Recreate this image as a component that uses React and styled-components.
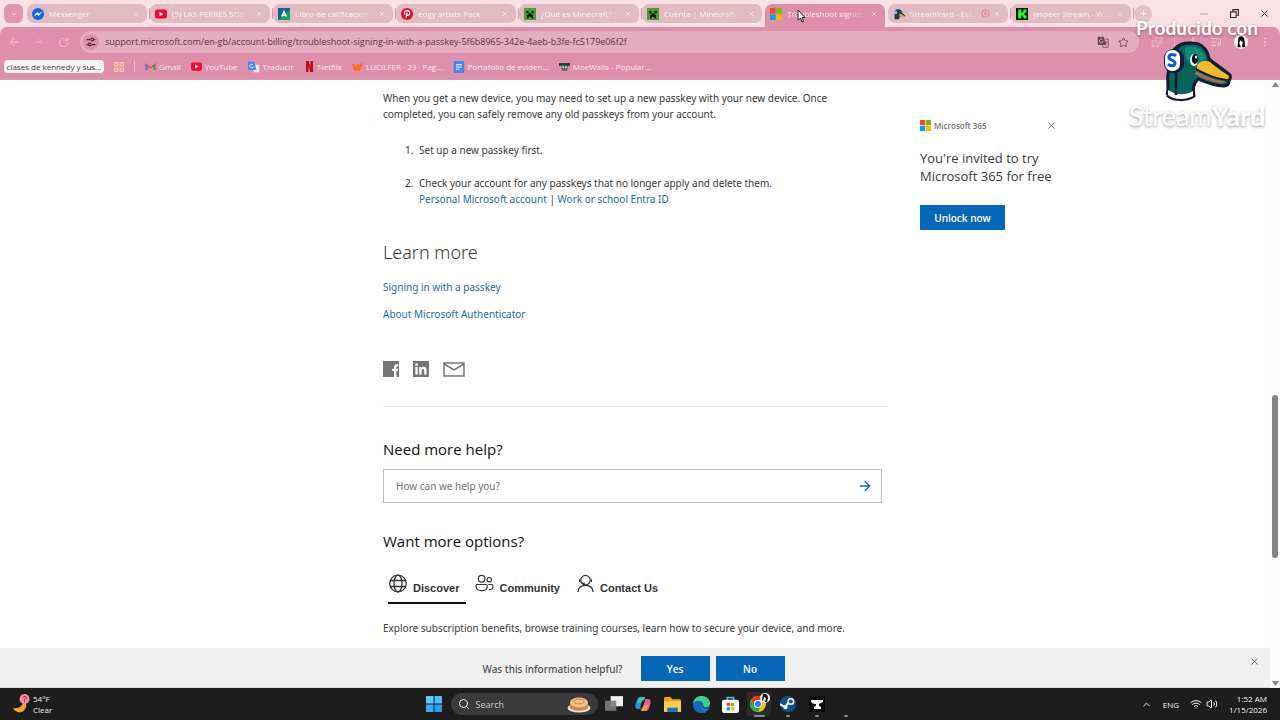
import React from 'react';
import styled, { createGlobalStyle } from 'styled-components';
import {
  ArrowLeft,
  ArrowRight,
  ChevronDown,
  ChevronUp,
  Download,
  EllipsisVertical,
  ListMusic,
  Minus,
  Plus,
  Puzzle,
  RotateCw,
  Search,
  Star,
  Volume2,
  Wifi,
  X,
} from 'lucide-react';

const GlobalStyle = createGlobalStyle`
  * {
    box-sizing: border-box;
  }
  body {
    margin: 0;
    font-family: 'Noto Sans', 'Open Sans', sans-serif;
    font-size: 10px;
    line-height: 16px;
    color: #3a3a3a;
  }
  button,
  input {
    font: inherit;
    color: inherit;
    border: 0;
    padding: 0;
    background: none;
  }
  svg {
    display: block;
    flex: none;
  }
  a {
    color: #2b6c9e;
    text-decoration: none;
  }
`;

const Screen = styled.div`
  position: relative;
  display: flex;
  flex-direction: column;
  height: 100vh;
  overflow: hidden;
  background: #fefefe;
`;

/* browser tabs */

const BrowserFrame = styled.header`
  font-family: 'Open Sans', 'Noto Sans', sans-serif;
  background: #fbe0e6;
`;

const TabStrip = styled.div`
  display: flex;
  align-items: center;
  height: 27px;
  padding-left: 4px;
`;

const TabMenuButton = styled.button`
  display: grid;
  place-items: center;
  width: 19px;
  height: 19px;
  margin-right: 4px;
  border-radius: 6px;
  background: #e096b0;
  color: #fff;
`;

const TabSlot = styled.div`
  flex: 0 1 123px;
  min-width: 0;
  height: 27px;
  padding: 4px 0;
  display: flex;
  gap: 1px;
  align-items: center;
  padding-bottom: ${(p) => (p.$active ? 0 : 4)}px;
  &::after {
    content: '';
    width: 1px;
    height: 11px;
    margin-left: 1px;
    background: ${(p) => (p.$line ? '#dd9db0' : 'transparent')};
  }
`;

const Tab = styled.div`
  flex: 1;
  min-width: 0;
  height: 100%;
  display: flex;
  align-items: center;
  gap: 3px;
  padding: 0 7px 0 5px;
  padding-bottom: ${(p) => (p.$active ? 4 : 0)}px;
  border-radius: ${(p) => (p.$active ? '7px 7px 0 0' : '7px')};
  background: ${(p) => (p.$active ? '#de8fab' : '#e0bcc2')};
  color: #fdeef2;
`;

const TabTitle = styled.button`
  flex: 1;
  min-width: 0;
  display: flex;
  align-items: center;
  gap: 5px;
  font-size: 8px;
  text-align: left;
  span {
    flex: 1;
    min-width: 0;
    overflow: hidden;
    white-space: nowrap;
    mask-image: linear-gradient(90deg, #000 75%, transparent);
  }
`;

const PlainButton = styled.button`
  display: grid;
  place-items: center;
  color: inherit;
`;

const NewTabButton = styled(PlainButton)`
  width: 18px;
  height: 18px;
  border-radius: 50%;
  background: #e5c0c7;
  color: #fff;
`;

const WindowButtons = styled.div`
  display: flex;
  gap: 20px;
  margin-left: auto;
  padding-right: 10px;
  color: #3b2a30;
  & > :first-child {
    color: #b79aa3;
  }
`;

/* toolbar */

const Toolbar = styled.div`
  background: #de8fab;
  border-radius: 7px 7px 0 0;
  border-bottom: 1px solid #d49aae;
  height: 53px;
  flex: none;
  padding-top: 4px;
`;

const AddressRow = styled.div`
  display: flex;
  align-items: center;
  height: 22px;
  padding: 0 9px 0 8px;
  color: #f8c3d2;
`;

const NavButtons = styled.div`
  display: flex;
  gap: 13px;
  width: 72px;
`;

const AddressBar = styled.div`
  flex: 1;
  height: 22px;
  display: flex;
  align-items: center;
  gap: 9px;
  padding: 0 10px 0 3px;
  border-radius: 11px;
  background: #e5adc0;
  color: #6f4453;
`;

const SiteInfo = styled(PlainButton)`
  width: 16px;
  height: 16px;
  margin-right: -3px;
  border-radius: 50%;
  background: #de8fab;
  color: #4c2b38;
`;

const UrlInput = styled.input`
  flex: 1;
  min-width: 0;
  font-size: 9px;
  color: #5d3745;
  outline: 0;
`;

const Extensions = styled.div`
  display: flex;
  align-items: center;
  justify-content: space-between;
  width: 120px;
  margin-left: 12px;
`;

const Bookmarks = styled.nav`
  display: flex;
  align-items: center;
  gap: 10px;
  height: 27px;
  padding-left: 4px;
  font-size: 8px;
  a {
    display: flex;
    align-items: center;
    gap: 3px;
    color: #fdeaf0;
    white-space: nowrap;
  }
`;

const BookmarkGroup = styled.button`
  width: 100px;
  height: 13px;
  line-height: 12px;
  border-radius: 4px;
  background: #fdf6f8;
  color: #45363b;
  white-space: nowrap;
`;

const Divider = styled.i`
  width: 1px;
  height: 11px;
  background: #edb8c9;
`;

/* article */

const Viewport = styled.div`
  flex: 1;
  min-height: 0;
  display: grid;
  grid-template-columns: 1fr 10px;
`;

const Page = styled.div`
  display: flex;
  flex-direction: column;
  min-height: 0;
`;

const PageBody = styled.div`
  flex: 1;
  min-height: 0;
  overflow: hidden;
  display: flex;
  justify-content: center;
  gap: 32px;
`;

const Article = styled.main`
  flex: 0 1 505px;
  margin-left: 170px;
  padding-top: 10px;
  p {
    margin: 0;
  }
`;

const Intro = styled.p`
  padding-right: 40px;
`;

const Steps = styled.ol`
  display: flex;
  flex-direction: column;
  gap: 17px;
  margin: 20px 0 0;
  padding-left: 33px;
  li {
    padding-left: 3px;
  }
`;

const SectionTitle = styled.h2`
  margin: 33px 0 0;
  font-size: 18px;
  line-height: 24px;
  font-weight: 300;
`;

const SubTitle = styled.h3`
  margin: 0;
  font-family: 'Open Sans', 'Noto Sans', sans-serif;
  font-size: 15px;
  line-height: 24px;
  font-weight: 400;
  color: #111;
`;

const LinkList = styled.div`
  display: flex;
  flex-direction: column;
  align-items: flex-start;
  gap: 11px;
  margin-top: 15px;
`;

const ShareRow = styled.div`
  display: flex;
  align-items: center;
  gap: 14px;
  height: 16px;
  margin: 39px 0 29px;
  a {
    color: #767676;
  }
`;

const Rule = styled.hr`
  margin: 0 0 30px;
  border: 0;
  border-top: 1px solid #e6e6e6;
`;

const HelpBox = styled.form`
  display: flex;
  align-items: center;
  height: 34px;
  margin: 8px 6px 26px 0;
  padding: 0 8px 0 12px;
  border: 1px solid #bcbcbc;
  input {
    flex: 1;
    outline: 0;
  }
  input::placeholder {
    color: #757575;
  }
  button {
    color: #1f6aa8;
  }
`;

const OptionTabs = styled.div`
  display: flex;
  gap: 9px;
  margin: 16px 0 16px 5px;
`;

const OptionTab = styled.button`
  display: flex;
  gap: 5px;
  height: 35px;
  padding: 5px 7px 0 0;
  border-bottom: 2px solid ${(p) => (p.$active ? '#111' : 'transparent')};
  font-family: 'Liberation Sans', sans-serif;
  font-size: 11px;
  font-weight: 700;
  color: #333;
  span {
    padding-top: 6px;
  }
`;

const Promo = styled.aside`
  width: 137px;
  padding-top: 37px;
  p {
    margin: 15px 0 20px;
    font-family: 'Open Sans', 'Noto Sans', sans-serif;
    font-size: 13px;
    line-height: 18px;
    white-space: nowrap;
  }
`;

const PromoHead = styled.div`
  display: flex;
  align-items: center;
  gap: 3px;
  height: 17px;
  font-family: 'Open Sans', 'Noto Sans', sans-serif;
  font-size: 8px;
  font-weight: 600;
  color: #737373;
  button {
    margin-left: auto;
    color: #444;
  }
`;

const BlueButton = styled.button`
  width: ${(p) => p.$width}px;
  height: 25px;
  background: #0667b8;
  color: #fff;
  font-family: 'Open Sans', 'Noto Sans', sans-serif;
  font-weight: 600;
`;

const Feedback = styled.section`
  display: grid;
  grid-template-columns: 1fr auto 1fr;
  height: 40px;
  padding: 8px 10px 7px 7px;
  background: #f0f0f0;
  border-bottom: 1px solid #dcdedc;
`;

const FeedbackAsk = styled.div`
  grid-column: 2;
  display: flex;
  align-items: center;
  gap: 6px;
  font-weight: 500;
  color: #505050;
  span {
    margin-right: 12px;
  }
`;

const FeedbackClose = styled(PlainButton)`
  justify-self: end;
  align-self: start;
`;

const ScrollTrack = styled.div`
  display: grid;
  grid-template-rows: 9px 305fr 163fr 121fr 9px;
  justify-items: center;
  align-items: center;
  background: #fdfdfd;
  color: #858585;
`;

const ScrollThumb = styled.div`
  grid-row: 3;
  width: 6px;
  height: 100%;
  border-radius: 3px;
  background: #858585;
`;

const ScrollArrow = styled.svg`
  grid-row: ${(p) => p.$row};
`;

/* taskbar */

const Taskbar = styled.footer`
  flex: none;
  display: grid;
  grid-template-columns: 1fr auto 1fr;
  align-items: center;
  height: 32px;
  background: #1d1d1d;
  color: #f2f2f2;
  font-family: 'Open Sans', 'Noto Sans', sans-serif;
  font-size: 8px;
  line-height: 11px;
`;

const Weather = styled.button`
  justify-self: start;
  display: flex;
  align-items: center;
  gap: 3px;
  padding-left: 12px;
  text-align: left;
`;

const TaskIcons = styled.div`
  display: flex;
  align-items: center;
`;

const TaskButton = styled.button`
  position: relative;
  display: grid;
  place-items: center;
  width: 29px;
  height: 32px;
  &::after {
    content: '';
    position: absolute;
    bottom: 3px;
    width: ${(p) => p.$dot || 0}px;
    height: 2px;
    border-radius: 1px;
    background: #8a8a8a;
  }
`;

const TaskSearch = styled.label`
  display: flex;
  align-items: center;
  gap: 6px;
  width: 147px;
  height: 22px;
  margin: 0 2px;
  padding: 0 7px;
  border-radius: 11px;
  background: #3a3a3a;
  font-size: 9px;
  input {
    flex: 1;
    min-width: 0;
    outline: 0;
  }
  input::placeholder {
    color: #c9c9c9;
  }
`;

const Tray = styled.div`
  justify-self: end;
  display: flex;
  align-items: center;
  padding-right: 13px;
  gap: 11px;
  text-align: right;
`;

const TrayStatus = styled.button`
  display: flex;
  gap: 4px;
`;

/* broadcast mark and pointer, both over everything else */

const Watermark = styled.div`
  position: absolute;
  top: 16px;
  right: 14px;
  width: 138px;
  display: flex;
  flex-direction: column;
  align-items: center;
  color: #fff;
  font-family: Lato, sans-serif;
  font-size: 19px;
  line-height: 24px;
  font-weight: 700;
  text-shadow: 0 1px 3px rgba(90, 60, 70, 0.6);
  white-space: nowrap;
  pointer-events: none;
`;

const Brand = styled.div`
  font-size: 27px;
  line-height: 28px;
  font-weight: 400;
  text-shadow: 0 1px 3px rgba(0, 0, 0, 0.4);
  b {
    font-weight: 900;
  }
`;

const Pointer = styled.svg`
  position: absolute;
  left: 797px;
  top: 9px;
`;

const Icon = ({ size = 12, w, h, box = '0 0 16 16', children }) => (
  <svg width={w || size} height={h || size} viewBox={box} fill="none">
    {children}
  </svg>
);

const MessengerIcon = () => (
  <Icon>
    <circle cx="8" cy="8" r="8" fill="#1264e8" />
    <path d="M3.500 10 7 6l2.200 2L12.500 6 9 10 6.800 8z" fill="#fff" stroke="#fff" />
  </Icon>
);

const YouTubeIcon = ({ size = 12 }) => (
  <Icon size={size}>
    <rect y="2" width="16" height="12" rx="3" fill="#f3062f" />
    <path d="m6 5 5 3-5 3z" fill="#fff" />
  </Icon>
);

const BookIcon = () => (
  <Icon>
    <path d="M0 0h16v16H0z" fill="#12649b" />
    <path d="M0 16 16 3v13z" fill="#15a05b" />
    <path d="m5 11.500 3-7 3 7M6 9.500h4" stroke="#fff" strokeWidth="1.800" />
  </Icon>
);

const PinterestIcon = () => (
  <Icon>
    <circle cx="8" cy="8" r="8" fill="#d3122b" />
    <path
      d="M5.500 9C3.500 6 5 3.500 8.200 3.500c3 0 4 2 3.300 4.200-.7 2.300-3 2.600-3.600 1.300M8.300 6 6.500 13"
      stroke="#fff"
      strokeWidth="1.600"
    />
  </Icon>
);

const CreeperIcon = () => (
  <Icon>
    <path d="M0 0h16v16H0z" fill="#4c9c3b" />
    <path d="M3 4h3v3H3zm7 0h3v3h-3zM6 7h4v2h2v5h-2v-2H6v2H4V9h2z" fill="#0b1a0a" />
  </Icon>
);

const WindowsIcon = ({ size = 12, colors }) => {
  const [a, b, c, d] = colors || ['#f05022', '#7db701', '#00a3ee', '#fdb800'];
  return (
    <Icon size={size}>
      <path d="M0 0h7.500v7.500H0z" fill={a} />
      <path d="M8.500 0H16v7.500H8.500z" fill={b} />
      <path d="M0 8.500h7.500V16H0z" fill={c} />
      <path d="M8.500 8.500H16V16H8.500z" fill={d} />
    </Icon>
  );
};

const DuckSmallIcon = () => (
  <Icon>
    <path d="M2 15V6c0-6 10-6 10 0l4 4v2l-7-1-1 4z" fill="#133f46" />
    <path d="m9 7 7 4-1 2-7-3z" fill="#f0a02d" />
    <circle cx="3.500" cy="6" r="2.200" fill="#8fb8ff" />
  </Icon>
);

const KickIcon = () => (
  <Icon>
    <path d="M0 0h16v16H0z" fill="#0a1a08" />
    <path d="M3 2h4v4h2V4h1V2h4v4h-2v1h-1v2h1v1h2v4h-4v-2H9v-2H7v4H3z" fill="#33f523" />
  </Icon>
);

const GmailIcon = () => (
  <Icon size={11}>
    <path d="M1 13V3l7 6 7-6v10h-3V8l-4 3-4-3v5z" fill="#ea4335" />
    <path d="M1 4v9h3V7z" fill="#4285f4" />
    <path d="M15 4v9h-3V7z" fill="#34a853" />
  </Icon>
);

const TranslateIcon = () => (
  <Icon>
    <path d="M5 5h10v10H8z" fill="#dfe6ee" />
    <path d="M0 1h8l4 11H2a2 2 0 0 1-2-2z" fill="#4285f4" />
    <path d="M7 5.500A2.500 2.500 0 1 0 7 8H5M9 8h5m-1 0-3 5" stroke="#fff" />
  </Icon>
);

const NetflixIcon = () => (
  <Icon size={11}>
    <path d="M3 0h3.500L13 16H9.500z" fill="#e50914" />
    <path d="M3 0h3.500v16H3zM9.500 0H13v16H9.500z" fill="#a9101c" />
  </Icon>
);

const WattpadIcon = () => (
  <Icon size={11}>
    <path d="M2 4c1 6 1 9 3 9 2-1 2-5 4-8-1 5-1 8 1 8 2-1 2-7 5-9" stroke="#ff6a1d" strokeWidth="3.500" />
  </Icon>
);

const DocsIcon = () => (
  <Icon>
    <rect x="1" width="14" height="16" rx="2" fill="#4584f0" />
    <path d="M4 5h8M4 8h8M4 11h5" stroke="#fff" strokeWidth="1.500" />
  </Icon>
);

const MoeIcon = () => (
  <Icon size={11}>
    <path d="M0 3h16v4H0z" fill="#2b3a34" />
    <path d="M3 7h10l-1 7H4z" fill="#56705c" />
    <path d="M5 8h2v2H5zm4 0h2v2H9z" fill="#fff" />
  </Icon>
);

const SettingsSliders = () => (
  <Icon size={10}>
    <path d="M1 4h6m6 0h2M1 12h2m6 0h6" stroke="currentColor" strokeWidth="2" />
    <circle cx="10" cy="4" r="2.200" stroke="currentColor" strokeWidth="1.800" />
    <circle cx="6" cy="12" r="2.200" stroke="currentColor" strokeWidth="1.800" />
  </Icon>
);

const PageTranslate = () => (
  <Icon size={12}>
    <path d="M1 1h8l3 11H2.500L1 11z" fill="currentColor" />
    <path d="M7.500 5A2.500 2.500 0 1 0 8 7.500H6" stroke="#e5adc0" />
    <path d="M11 4h4v11H8l-1-3m3-4h4m-2-1v1m1 0-3 4m0-2 3 2" stroke="currentColor" />
  </Icon>
);

const ProfileIcon = () => (
  <Icon size={14}>
    <circle cx="8" cy="8" r="8" fill="#fff" />
    <path d="M5 3c3-3 7-1 7 3l1 8H9l1-6-3-2-1 3 2 5H4z" fill="#111" />
  </Icon>
);

const FacebookIcon = () => (
  <Icon size={16}>
    <path
      fill="currentColor"
      d="M0 0h16v16h-2.600V10h1.500l.3-2.200h-1.800V6.400c0-.7.200-1.100 1.100-1.100h.8v-2c-.4-.1-.9-.1-1.400-.1-1.800 0-2.900 1.100-2.900 2.900v1.700H9V10h2v6H0z"
    />
  </Icon>
);

const LinkedInIcon = () => (
  <Icon size={16}>
    <path
      fill="currentColor"
      fillRule="evenodd"
      d="M0 0h16v16H0zM2.300 6v7.600h2.400V6zM3.500 2.300a1.400 1.400 0 1 0 0 2.800 1.400 1.400 0 0 0 0-2.800M6.200 6v7.600h2.400V9.800c0-1 .3-1.900 1.400-1.900s1.200 1 1.200 2v3.700h2.400V9.400c0-2.100-.5-3.600-2.900-3.600-1.100 0-1.900.6-2.200 1.200V6z"
    />
  </Icon>
);

const MailIcon = () => (
  <Icon w={22} h={16} box="0 0 22 16">
    <path d="M1 2h20v13H1zm0 1 10 6 10-6" stroke="currentColor" strokeWidth="1.500" />
  </Icon>
);

const GlobeIcon = () => (
  <Icon size={20} box="0 0 20 20">
    <g stroke="#333" strokeWidth="1.300">
      <circle cx="10" cy="9.500" r="8.300" />
      <ellipse cx="10" cy="9.500" rx="4" ry="8.300" />
      <path d="M2.500 6.500h15M2.500 12.500h15" />
    </g>
  </Icon>
);

const PeopleIcon = () => (
  <Icon size={19} box="0 0 20 20">
    <g stroke="#333" strokeWidth="1.200">
      <circle cx="7" cy="5" r="3.500" />
      <circle cx="15" cy="6" r="2.300" />
      <path d="M2.500 11h9c1 0 1.500.5 1.500 1.500 0 3-2 5-6 5s-6-2-6-5c0-1 .5-1.500 1.500-1.500zM14 11h3.500c1 0 1.500.5 1.500 1.500 0 2.500-1.500 4-4.500 4" />
    </g>
  </Icon>
);

const AgentIcon = () => (
  <Icon size={19} box="0 0 20 20">
    <g stroke="#333" strokeWidth="1.300">
      <circle cx="10" cy="6.500" r="5" />
      <path d="M3.800 5.500v3M16.200 5.500v3M5 8.500c1.500 1.500 3 1.500 4.500 1M2 19c.5-5 4-7 8-7s7.500 2 8 7" />
    </g>
  </Icon>
);

const MoonIcon = () => (
  <Icon w={18} h={20} box="0 0 18 20">
    <path d="M10 4c3 8-3 11-9 10 3 6 11 6 13-1 1-4-1-7-4-9" fill="#eda63a" />
    <circle cx="12.500" cy="5" r="5" fill="#f58a98" />
    <path d="M11 3.500c.5-1.500 3-1.500 3 0S12.500 5 12.500 6.500m0 .7v1" stroke="#6c2430" />
  </Icon>
);

const PancakeIcon = () => (
  <Icon w={24} h={18} box="0 0 24 18">
    <ellipse cx="12" cy="13" rx="11.500" ry="4.500" fill="#e8e0d6" />
    <path d="M3 7h18v5c0 5-18 5-18 0z" fill="#c98a4b" />
    <ellipse cx="12" cy="7.500" rx="9" ry="5" fill="#eec28a" />
    <ellipse cx="12" cy="6.500" rx="5" ry="2.400" stroke="#c97f35" />
  </Icon>
);

const TaskViewIcon = () => (
  <Icon size={18}>
    <path d="M5 1h11v9H5z" fill="#f0f0f0" />
    <path d="M0 5h10v9H0z" fill="#7d7d7d" fillOpacity=".9" />
  </Icon>
);

const CopilotIcon = () => (
  <Icon size={16}>
    <path d="M5 1h5l-4 12H3c-3 0-3-3-2-6 1-4 2-6 4-6" fill="#2b8ee6" />
    <path d="M4 3c1-2 2-2 3-2h3L8 7H2z" fill="#44c4a1" />
    <path d="M11 15H6l4-12h3c3 0 3 3 2 6-1 4-2 6-4 6" fill="#e05c9a" />
    <path d="M12 13c-1 2-2 2-3 2H6l2-6h6z" fill="#f39a4a" />
    <path d="m7 5 3-1-2 7-3 1z" fill="#231f2a" />
  </Icon>
);

const FolderIcon = () => (
  <Icon size={17}>
    <path d="M0 2.500C0 1.500.5 1 1.500 1H6l2 2h6.500c1 0 1.500.5 1.500 1.500V7H0z" fill="#e2a21c" />
    <path d="M0 5h16v10H0z" fill="#fbd04d" />
    <path d="M3 15v-4h10v4z" fill="#1c76c8" />
  </Icon>
);

const EdgeIcon = () => (
  <Icon size={17}>
    <circle cx="8" cy="8" r="8" fill="#1a7fd0" />
    <path d="M0 7C1 1 6 0 8 0c5 0 8 3.500 8 6.500 0 3-2 4-4 4S9 9.500 9.600 8.500C10.500 6 5 2 0 7" fill="#3fcf8e" />
    <path d="M0 8c2-5 9-4 9.500-1-2 1-3 5 1 7.500 1 .5 2 .3 3 0C8 18 0 15 0 8" fill="#1567b8" />
    <path d="M9.500 7.500c-1.500 2-.5 5 5.500 4 .5-.5.500-1-.5-.6-3 .8-5.500-.4-5-2.400" fill="#1d1d1d" />
  </Icon>
);

const StoreIcon = () => (
  <Icon size={17}>
    <path d="M5 4V1.500h6V4" stroke="#58a6e8" strokeWidth="1.500" />
    <rect y="3.500" width="16" height="12.500" rx="2" fill="#f4f6f8" />
    <path d="M4.500 6.500h3v3h-3z" fill="#f05022" />
    <path d="M8.500 6.500h3v3h-3z" fill="#7db701" />
    <path d="M4.500 10.500h3v3h-3z" fill="#00a3ee" />
    <path d="M8.500 10.500h3v3h-3z" fill="#fdb800" />
  </Icon>
);

const ChromeIcon = () => (
  <Icon size={24} box="0 0 24 24">
    <rect width="24" height="24" rx="3" fill="#2b2b2b" />
    <circle cx="11" cy="12" r="8" fill="#fbc116" />
    <path d="M4 8a8 8 0 0 1 14 0h-7l-3.500 6z" fill="#e33b2e" />
    <path d="M4 8a8 8 0 0 0 7 12l3.500-6h-7z" fill="#2da94f" />
    <circle cx="11" cy="12" r="4" fill="#fff" />
    <circle cx="11" cy="12" r="3" fill="#2b7de9" />
    <circle cx="18" cy="6" r="5" fill="#f4f4f4" />
    <path d="M16 2c3-1 5 1 5 4l-1 4h-2l1-4-2-1-1 4-1-1z" fill="#111" />
  </Icon>
);

const SteamIcon = () => (
  <Icon size={16}>
    <circle cx="8" cy="8" r="8" fill="#17508f" />
    <path d="m0 8 5 3 5-6" stroke="#fff" strokeWidth="2" />
    <circle cx="10.800" cy="5.500" r="2.800" fill="#17508f" stroke="#fff" strokeWidth="1.400" />
    <circle cx="5.500" cy="11.200" r="2" fill="#fff" />
  </Icon>
);

const AnvilIcon = () => (
  <Icon size={16}>
    <path d="M0 0h16v16H0z" fill="#080808" />
    <path d="M2 4h12v2l-4 2v2l2 1v2H5v-2l2-1V8C4 8 2 7 2 4" fill="#fff" />
  </Icon>
);

const DuckLogo = () => (
  <Icon w={72} h={62} box="0 0 72 62">
    <path
      d="M6 55c3-9-2-17 3-29C8 9 18 2 30 3c12 0 17 8 18 16 7 6 14 10 21 16 1 2 0 4-1 6 0 3-2 5-5 5-8 0-17-3-26-7-5 5-5 9-4 17C25 61 13 61 6 55"
      fill="#07645d"
      stroke="#121a2b"
      strokeWidth="3"
      strokeLinejoin="round"
    />
    <path d="M24 7c12-3 20 4 21 12l-10 8c-8-3-12-11-11-20" fill="#15877b" />
    <path d="M7 50c7 5 17 6 25 1v5c-8 4-19 4-25-1z" fill="#fff" />
    <path d="M36 26c2-5 9-6 13-4 5 5 12 9 19 14l-1 4c-11-1-19-6-31-11z" fill="#f4b82c" />
    <path d="M35 31c9 5 19 9 29 10 0 3-3 3-7 2-9-2-17-5-23-9z" fill="#a66b4c" />
    <path d="M35 29c10 6 21 10 32 11" stroke="#121a2b" strokeWidth="1.500" />
    <ellipse cx="33" cy="20" rx="4" ry="6" fill="#fff" />
    <ellipse cx="34" cy="19" rx="3.200" ry="5" fill="#0e1420" />
    <ellipse cx="35" cy="17" rx="1" ry="1.500" fill="#fff" />
    <path d="M15 30v25M14 11c5-8 12-8 17-8" stroke="#121a2b" strokeWidth="2.500" />
    <rect x="3" y="9" width="20" height="24" rx="9" fill="#121a3d" />
    <rect x="4" y="10" width="15" height="21" rx="7" fill="#fff" />
    <path d="M15 16c-3-3-8-1-7 2s6 2 6 5-4 4-7 1" stroke="#1753d8" strokeWidth="3" />
  </Icon>
);

const tabs = [
  { title: 'Messenger', icon: <MessengerIcon /> },
  { title: '(5) LAS PERRES SOB', icon: <YouTubeIcon /> },
  { title: 'Libro de calificacion', icon: <BookIcon /> },
  { title: 'edgy artists Pack', icon: <PinterestIcon /> },
  { title: '¿Qué es Minecraft? |', icon: <CreeperIcon /> },
  { title: 'Cuenta | Minecraft', icon: <CreeperIcon /> },
  { title: 'Troubleshoot signin', icon: <WindowsIcon />, active: true },
  { title: 'StreamYard - Est', icon: <DuckSmallIcon />, live: true },
  { title: 'jaspeer Stream - W...', icon: <KickIcon /> },
];

const bookmarks = [
  { label: 'Gmail', icon: <GmailIcon /> },
  { label: 'YouTube', icon: <YouTubeIcon size={11} /> },
  { label: 'Traducir', icon: <TranslateIcon /> },
  { label: 'Netflix', icon: <NetflixIcon /> },
  { label: 'LUCILFER · 23 · Pag...', icon: <WattpadIcon /> },
  { label: 'Portafolio de eviden...', icon: <DocsIcon /> },
  { label: 'MoeWalls - Popular...', icon: <MoeIcon /> },
];

const options = [
  { label: 'Discover', icon: <GlobeIcon />, active: true },
  { label: 'Community', icon: <PeopleIcon /> },
  { label: 'Contact Us', icon: <AgentIcon /> },
];

const apps = [
  { name: 'Task view', icon: <TaskViewIcon /> },
  { name: 'Copilot', icon: <CopilotIcon /> },
  { name: 'File Explorer', icon: <FolderIcon /> },
  { name: 'Edge', icon: <EdgeIcon /> },
  { name: 'Store', icon: <StoreIcon /> },
  { name: 'Chrome', icon: <ChromeIcon />, dot: 11 },
  { name: 'Steam', icon: <SteamIcon />, dot: 4 },
  { name: 'Anvil', icon: <AnvilIcon />, dot: 4 },
  { name: 'App', icon: null, dot: 4 },
];

const Browser = () => (
  <BrowserFrame>
    <TabStrip>
      <TabMenuButton aria-label="Search tabs">
        <ChevronDown size={8} />
      </TabMenuButton>
      {tabs.map((tab, i) => (
        <TabSlot
          key={tab.title}
          $active={tab.active}
          $line={!tab.active && !(tabs[i + 1] && tabs[i + 1].active)}
        >
          <Tab $active={tab.active}>
            <TabTitle>
              {tab.icon}
              <span>{tab.title}</span>
            </TabTitle>
            {tab.live && (
              <Icon size={9}>
                <circle cx="8" cy="8" r="6" stroke="#ea8c93" strokeWidth="2" />
                <circle cx="8" cy="8" r="2.500" fill="#ea8c93" />
              </Icon>
            )}
            <PlainButton aria-label="Close tab">
              <X size={8} />
            </PlainButton>
          </Tab>
        </TabSlot>
      ))}
      <NewTabButton aria-label="New tab">
        <Plus size={9} />
      </NewTabButton>
      <WindowButtons>
        <PlainButton aria-label="Minimize">
          <Minus size={12} />
        </PlainButton>
        <PlainButton aria-label="Restore">
          <Icon size={9}>
            <path d="M1 5h10v10H1zM5 5V1h10v10h-4" stroke="currentColor" strokeWidth="2" />
          </Icon>
        </PlainButton>
        <PlainButton aria-label="Close">
          <X size={11} />
        </PlainButton>
      </WindowButtons>
    </TabStrip>
    <Toolbar>
      <AddressRow>
        <NavButtons>
          <PlainButton aria-label="Back">
            <ArrowLeft size={12} />
          </PlainButton>
          <PlainButton aria-label="Forward">
            <ArrowRight size={12} opacity={0.5} />
          </PlainButton>
          <PlainButton aria-label="Reload">
            <RotateCw size={11} />
          </PlainButton>
        </NavButtons>
        <AddressBar>
          <SiteInfo aria-label="Site information">
            <SettingsSliders />
          </SiteInfo>
          <UrlInput
            aria-label="Address"
            defaultValue="support.microsoft.com/en-gb/account-billing/troubleshoot-signing-in-with-a-passkey-5f6b8965-342e-4aeb-b3fe-fc5179e06f2f"
          />
          <PlainButton aria-label="Translate">
            <PageTranslate />
          </PlainButton>
          <PlainButton aria-label="Bookmark">
            <Star size={11} />
          </PlainButton>
        </AddressBar>
        <Extensions>
          <Puzzle size={12} />
          <Divider />
          <Download size={12} />
          <ListMusic size={12} />
          <ProfileIcon />
          <EllipsisVertical size={12} />
        </Extensions>
      </AddressRow>
      <Bookmarks>
        <BookmarkGroup>clases de kennedy y sus...</BookmarkGroup>
        <Icon size={10}>
          <path d="M1 1h5v5H1zm9 0h5v5h-5zM1 10h5v5H1zm9 0h5v5h-5z" stroke="#f9cba9" strokeWidth="2" />
        </Icon>
        <Divider />
        {bookmarks.map((b) => (
          <a href="#bookmark" key={b.label}>
            {b.icon}
            {b.label}
          </a>
        ))}
      </Bookmarks>
    </Toolbar>
  </BrowserFrame>
);

const SupportArticle = () => (
  <Article>
    <Intro>
      When you get a new device, you may need to set up a new passkey with your
      new device. Once completed, you can safely remove any old passkeys from
      your account.
    </Intro>
    <Steps>
      <li>Set up a new passkey first.</li>
      <li>
        Check your account for any passkeys that no longer apply and delete
        them.
        <br />
        <a href="#personal">Personal Microsoft account</a> |{' '}
        <a href="#work">Work or school Entra ID</a>
      </li>
    </Steps>
    <SectionTitle>Learn more</SectionTitle>
    <LinkList>
      <a href="#signing">Signing in with a passkey</a>
      <a href="#authenticator">About Microsoft Authenticator</a>
    </LinkList>
    <ShareRow>
      <a href="#facebook" aria-label="Facebook">
        <FacebookIcon />
      </a>
      <a href="#linkedin" aria-label="LinkedIn">
        <LinkedInIcon />
      </a>
      <a href="#mail" aria-label="Email">
        <MailIcon />
      </a>
    </ShareRow>
    <Rule />
    <SubTitle>Need more help?</SubTitle>
    <HelpBox onSubmit={(e) => e.preventDefault()}>
      <input aria-label="How can we help you?" placeholder="How can we help you?" />
      <PlainButton aria-label="Search">
        <ArrowRight size={16} />
      </PlainButton>
    </HelpBox>
    <SubTitle>Want more options?</SubTitle>
    <OptionTabs>
      {options.map((o) => (
        <OptionTab key={o.label} $active={o.active}>
          {o.icon}
          <span>{o.label}</span>
        </OptionTab>
      ))}
    </OptionTabs>
    <p>
      Explore subscription benefits, browse training courses, learn how to
      secure your device, and more.
    </p>
  </Article>
);

const App = () => {
  return (
    <Screen>
      <GlobalStyle />
      <Browser />
      <Viewport>
        <Page>
          <PageBody>
            <SupportArticle />
            <Promo>
              <PromoHead>
                <WindowsIcon size={11} />
                Microsoft 365
                <PlainButton aria-label="Dismiss offer">
                  <X size={11} strokeWidth={1.5} />
                </PlainButton>
              </PromoHead>
              <p>
                You're invited to try
                <br />
                Microsoft 365 for free
              </p>
              <BlueButton $width={85}>Unlock now</BlueButton>
            </Promo>
          </PageBody>
          <Feedback>
            <FeedbackAsk>
              <span>Was this information helpful?</span>
              <BlueButton $width={69}>Yes</BlueButton>
              <BlueButton $width={69}>No</BlueButton>
            </FeedbackAsk>
            <FeedbackClose aria-label="Close feedback">
              <X size={11} strokeWidth={1.5} />
            </FeedbackClose>
          </Feedback>
        </Page>
        <ScrollTrack>
          <ScrollArrow $row={1} width="7" height="5" viewBox="0 0 7 5">
            <path d="M0 5 3.500 0 7 5z" fill="currentColor" />
          </ScrollArrow>
          <ScrollThumb />
          <ScrollArrow $row={5} width="7" height="5" viewBox="0 0 7 5">
            <path d="m0 0 3.500 5L7 0z" fill="currentColor" />
          </ScrollArrow>
        </ScrollTrack>
      </Viewport>
      <Taskbar>
        <Weather>
          <MoonIcon />
          <span>
            54°F
            <br />
            Clear
          </span>
        </Weather>
        <TaskIcons>
          <TaskButton aria-label="Start">
            <WindowsIcon size={16} colors={['#5fc9f8', '#49bdf5', '#35adf0', '#249fe8']} />
          </TaskButton>
          <TaskSearch>
            <Search size={12} />
            <input aria-label="Search" placeholder="Search" />
            <PancakeIcon />
          </TaskSearch>
          {apps.map((app) => (
            <TaskButton key={app.name} aria-label={app.name} $dot={app.dot}>
              {app.icon}
            </TaskButton>
          ))}
        </TaskIcons>
        <Tray>
          <ChevronUp size={11} />
          <span>ENG</span>
          <TrayStatus aria-label="Network and volume">
            <Wifi size={12} />
            <Volume2 size={12} />
          </TrayStatus>
          <span>
            1:52 AM
            <br />
            1/15/2026
          </span>
        </Tray>
      </Taskbar>
      <Watermark>
        Producido con
        <DuckLogo />
        <Brand>
          Stream<b>Yard</b>
        </Brand>
      </Watermark>
      <Pointer width="9" height="14" viewBox="0 0 9 14">
        <path d="M1 1v10l2.500-2 1.500 4 1.500-.7L5 8.500h3z" fill="#fff" stroke="#222" />
      </Pointer>
    </Screen>
  );
};

export default App;
